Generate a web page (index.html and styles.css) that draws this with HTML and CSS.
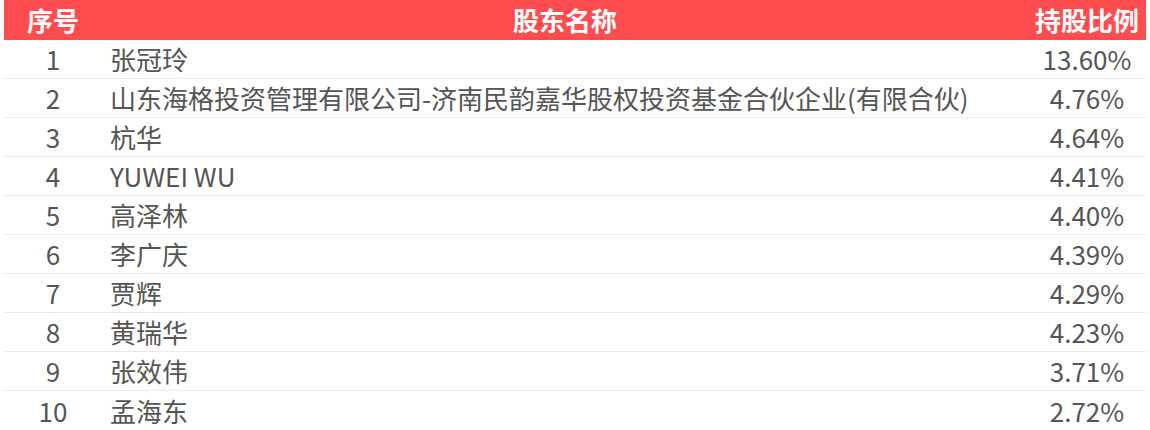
FILE: index.html
```html
<!DOCTYPE html>
<html lang="zh-CN">
<head>
<meta charset="utf-8">
<link rel="stylesheet" href="styles.css">
</head>
<body>
<div class="table">
  <div class="row head">
    <div class="c-no">序号</div>
    <div class="c-name">股东名称</div>
    <div class="c-pct">持股比例</div>
  </div>
  <div class="row"><div class="c-no">1</div><div class="c-name">张冠玲</div><div class="c-pct">13.60%</div></div>
  <div class="row"><div class="c-no">2</div><div class="c-name">山东海格投资管理有限公司-济南民韵嘉华股权投资基金合伙企业(有限合伙)</div><div class="c-pct">4.76%</div></div>
  <div class="row"><div class="c-no">3</div><div class="c-name">杭华</div><div class="c-pct">4.64%</div></div>
  <div class="row"><div class="c-no">4</div><div class="c-name">YUWEI WU</div><div class="c-pct">4.41%</div></div>
  <div class="row"><div class="c-no">5</div><div class="c-name">高泽林</div><div class="c-pct">4.40%</div></div>
  <div class="row"><div class="c-no">6</div><div class="c-name">李广庆</div><div class="c-pct">4.39%</div></div>
  <div class="row"><div class="c-no">7</div><div class="c-name">贾辉</div><div class="c-pct">4.29%</div></div>
  <div class="row"><div class="c-no">8</div><div class="c-name">黄瑞华</div><div class="c-pct">4.23%</div></div>
  <div class="row"><div class="c-no">9</div><div class="c-name">张效伟</div><div class="c-pct">3.71%</div></div>
  <div class="row"><div class="c-no">10</div><div class="c-name">孟海东</div><div class="c-pct">2.72%</div></div>
</div>
</body>
</html>
```
FILE: styles.css
```css
html, body {
  margin: 0;
  padding: 0;
  background: #ffffff;
}
body {
  font-family: "Noto Sans CJK SC", "Noto Sans", sans-serif;
  font-size: 26px;
  color: #555555;
}
.table {
  margin: 0 4px;
  display: flex;
  flex-direction: column;
}
.row {
  display: grid;
  grid-template-columns: 98px 1fr 118px;
  height: 39px;
  align-items: center;
  border-bottom: 1px solid #e9ebf0;
  box-sizing: border-box;
  line-height: 1;
}
.row:last-child {
  border-bottom: none;
}
.row.head {
  height: 40px;
  background: #ff4d4f;
  color: #ffffff;
  font-weight: bold;
  border-bottom: none;
}
.c-no {
  text-align: center;
}
.c-name {
  padding-left: 8px;
  white-space: nowrap;
}
.head .c-name {
  padding-left: 0;
  text-align: center;
}
.c-pct {
  text-align: center;
}
```
